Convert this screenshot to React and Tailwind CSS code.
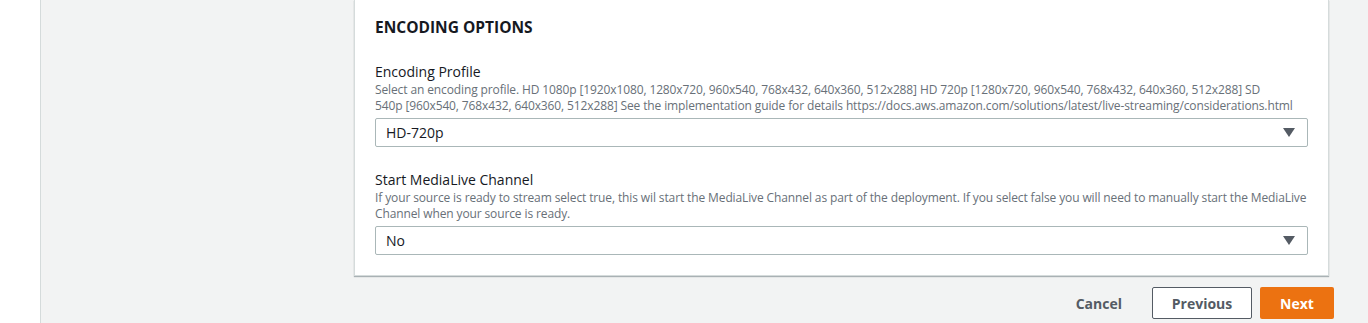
import { useState } from "react";

function SelectField({ label, lines, value, options }) {
  const [val, setVal] = useState(value);
  return (
    <div className="min-w-0">
      <div className="text-[14px] leading-[20px] text-[#16191f]">{label}</div>
      <p className="text-[12px] leading-[16px] text-[#687078] tracking-[-0.12px]">
        {lines.map((l) => (
          <span key={l} className="block whitespace-nowrap">
            {l}
          </span>
        ))}
      </p>
      <div className="relative mt-[4px]">
        <select
          value={val}
          onChange={(e) => setVal(e.target.value)}
          className="w-full h-[29px] appearance-none bg-white border border-[#aab7b8] rounded-[2px] pl-[10px] pr-8 text-[14px] text-[#16191f] outline-none"
        >
          {options.map((o) => (
            <option key={o}>{o}</option>
          ))}
        </select>
        <svg
          className="absolute right-[13px] top-[10px] pointer-events-none"
          width="12"
          height="9"
          viewBox="0 0 12 9"
        >
          <path d="M0 0h12L6 9z" fill="#545b64" />
        </svg>
      </div>
    </div>
  );
}

export default function App() {
  return (
    <div
      className="h-[323px] flex bg-[#f2f3f3] overflow-hidden"
      style={{ fontFamily: '"Open Sans", "Noto Sans", Arial, sans-serif' }}
    >
      <div className="w-[41px] bg-white border-r border-[#d5dbdb] shrink-0" />
      <div className="flex-1 min-w-0 pl-[313px] pr-[39px]">
        <div className="bg-white border-x border-b border-[#d5dbdb] shadow-[0_1px_1px_0_rgba(0,28,36,0.3)] px-[20px] pt-[17px] pb-[20px]">
          <h2 className="text-[15.5px] leading-[20px] font-bold text-[#16191f]">
            ENCODING OPTIONS
          </h2>
          <div className="mt-[25px] flex flex-col gap-[23px]">
            <SelectField
              label="Encoding Profile"
              lines={[
                "Select an encoding profile. HD 1080p [1920x1080, 1280x720, 960x540, 768x432, 640x360, 512x288] HD 720p [1280x720, 960x540, 768x432, 640x360, 512x288] SD",
                "540p [960x540, 768x432, 640x360, 512x288] See the implementation guide for details https://docs.aws.amazon.com/solutions/latest/live-streaming/considerations.html",
              ]}
              value="HD-720p"
              options={["HD-1080p", "HD-720p", "SD-540p"]}
            />
            <SelectField
              label="Start MediaLive Channel"
              lines={[
                "If your source is ready to stream select true, this wil start the MediaLive Channel as part of the deployment. If you select false you will need to manually start the MediaLive",
                "Channel when your source is ready.",
              ]}
              value="No"
              options={["Yes", "No"]}
            />
          </div>
        </div>
        <div className="flex justify-end items-center gap-[8px] mt-[11px] -mr-[5px]">
          <button className="pl-[20px] pr-[22px] h-[32px] text-[14px] font-bold text-[#545b64]">Cancel</button>
          <button className="w-[100px] h-[32px] text-[14px] font-bold text-[#545b64] bg-white border border-[#545b64] rounded-[2px]">
            Previous
          </button>
          <button className="w-[74px] h-[32px] text-[14px] font-bold text-white bg-[#ec7211] rounded-[2px]">
            Next
          </button>
        </div>
      </div>
    </div>
  );
}
